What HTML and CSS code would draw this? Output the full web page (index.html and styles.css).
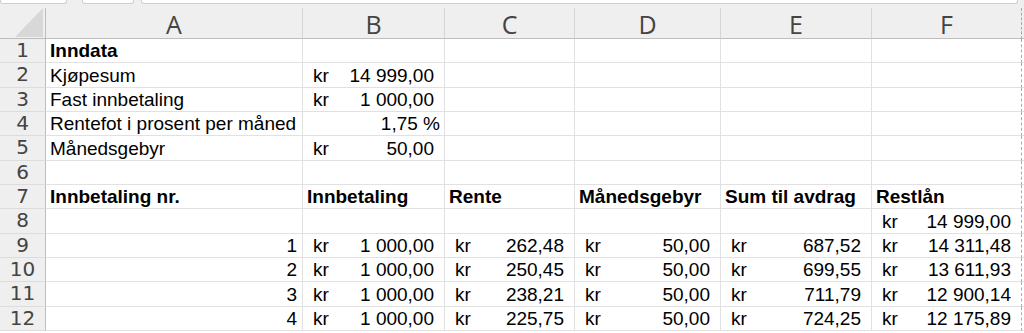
FILE: index.html
```html
<!DOCTYPE html>
<html lang="no">
<head>
<meta charset="utf-8">
<title>Nedbetaling</title>
<link rel="stylesheet" href="styles.css">
</head>
<body>
<div class="topbar">
  <div class="box box-name"></div>
  <div class="box box-btn"></div>
  <div class="box box-formula"></div>
</div>
<div class="sheet">
  <div class="hd corner"><svg width="28" height="29" viewBox="0 0 28 29"><polygon points="0,29 28,0 28,29" fill="#d8d8d8"/></svg></div>
  <div class="hd col">A</div><div class="hd col">B</div><div class="hd col">C</div><div class="hd col">D</div><div class="hd col">E</div><div class="hd col last">F</div><div class="hd tail"></div>

  <div class="rh">1</div><div class="c b">Inndata</div><div class="c"></div><div class="c"></div><div class="c"></div><div class="c"></div><div class="c last"></div><div class="c tail"></div>

  <div class="rh">2</div><div class="c">Kjøpesum</div><div class="c acct"><span>kr</span><span>14 999,00</span></div><div class="c"></div><div class="c"></div><div class="c"></div><div class="c last"></div><div class="c tail"></div>

  <div class="rh">3</div><div class="c">Fast innbetaling</div><div class="c acct"><span>kr</span><span>1 000,00</span></div><div class="c"></div><div class="c"></div><div class="c"></div><div class="c last"></div><div class="c tail"></div>

  <div class="rh">4</div><div class="c">Rentefot i prosent per måned</div><div class="c pct">1,75 %</div><div class="c"></div><div class="c"></div><div class="c"></div><div class="c last"></div><div class="c tail"></div>

  <div class="rh">5</div><div class="c">Månedsgebyr</div><div class="c acct"><span>kr</span><span>50,00</span></div><div class="c"></div><div class="c"></div><div class="c"></div><div class="c last"></div><div class="c tail"></div>

  <div class="rh">6</div><div class="c"></div><div class="c"></div><div class="c"></div><div class="c"></div><div class="c"></div><div class="c last"></div><div class="c tail"></div>

  <div class="rh">7</div><div class="c b">Innbetaling nr.</div><div class="c b">Innbetaling</div><div class="c b">Rente</div><div class="c b">Månedsgebyr</div><div class="c b">Sum til avdrag</div><div class="c b last">Restlån</div><div class="c tail"></div>

  <div class="rh">8</div><div class="c"></div><div class="c"></div><div class="c"></div><div class="c"></div><div class="c"></div><div class="c acct last"><span>kr</span><span>14 999,00</span></div><div class="c tail"></div>

  <div class="rh">9</div><div class="c num">1</div><div class="c acct"><span>kr</span><span>1 000,00</span></div><div class="c acct"><span>kr</span><span>262,48</span></div><div class="c acct"><span>kr</span><span>50,00</span></div><div class="c acct"><span>kr</span><span>687,52</span></div><div class="c acct last"><span>kr</span><span>14 311,48</span></div><div class="c tail"></div>

  <div class="rh">10</div><div class="c num">2</div><div class="c acct"><span>kr</span><span>1 000,00</span></div><div class="c acct"><span>kr</span><span>250,45</span></div><div class="c acct"><span>kr</span><span>50,00</span></div><div class="c acct"><span>kr</span><span>699,55</span></div><div class="c acct last"><span>kr</span><span>13 611,93</span></div><div class="c tail"></div>

  <div class="rh">11</div><div class="c num">3</div><div class="c acct"><span>kr</span><span>1 000,00</span></div><div class="c acct"><span>kr</span><span>238,21</span></div><div class="c acct"><span>kr</span><span>50,00</span></div><div class="c acct"><span>kr</span><span>711,79</span></div><div class="c acct last"><span>kr</span><span>12 900,14</span></div><div class="c tail"></div>

  <div class="rh">12</div><div class="c num">4</div><div class="c acct"><span>kr</span><span>1 000,00</span></div><div class="c acct"><span>kr</span><span>225,75</span></div><div class="c acct"><span>kr</span><span>50,00</span></div><div class="c acct"><span>kr</span><span>724,25</span></div><div class="c acct last"><span>kr</span><span>12 175,89</span></div><div class="c tail"></div>
</div>
</body>
</html>
```

FILE: styles.css
```css
* { box-sizing: border-box; }
html, body { margin: 0; padding: 0; }
body {
  width: 1024px;
  height: 333px;
  overflow: hidden;
  background: #ffffff;
  font-family: "Liberation Sans", Arial, sans-serif;
  color: #000;
}
.topbar {
  height: 8px;
  background: #efefef;
  display: flex;
  align-items: flex-start;
}
.box {
  height: 4px;
  background: #ffffff;
  border: 1px solid #cfcfcf;
  border-top: none;
  border-radius: 0 0 3px 3px;
}
.box-name { width: 67px; }
.box-btn { width: 52px; margin-left: 15px; }
.box-formula { width: 877px; margin-left: 7px; }

.sheet {
  display: grid;
  grid-template-columns: 46px 257px 142px 130px 146px 151px 150px 1fr;
  grid-template-rows: 31px repeat(12, 24.33px);
}
.hd {
  background: #efefef;
  border-right: 1px solid #d6d6d6;
  border-bottom: 1px solid #bdbdbd;
  display: flex;
  align-items: center;
  justify-content: center;
  color: #444;
}
.col {
  font-family: "Open Sans", sans-serif;
  font-size: 25px;
  line-height: 30px;
  padding-top: 1px;
}
.corner {
  justify-content: flex-end;
  align-items: flex-end;
  padding: 0 2px 1px 0;
  border-right: 1px solid #bdbdbd;
}
.rh {
  background: #efefef;
  border-right: 1px solid #bdbdbd;
  border-bottom: 1px solid #dcdcdc;
  display: flex;
  align-items: center;
  justify-content: center;
  font-family: "DejaVu Sans", sans-serif;
  font-size: 20px;
  line-height: 22px;
  color: #444;
  padding-bottom: 1px;
}
.c {
  border-right: 1px solid #e1e1e1;
  border-bottom: 1px solid #e1e1e1;
  display: flex;
  align-items: flex-end;
  padding: 0 4px 1px 4px;
  font-size: 19px;
  line-height: 21px;
  white-space: nowrap;
}
.b { font-weight: bold; }
.acct { justify-content: space-between; padding-left: 10px; padding-right: 10px; }
.num { justify-content: flex-end; padding-right: 5px; }
.pct { justify-content: flex-end; padding-right: 4px; }
.last { border-right: 1px dashed #a9a9a9; }
.hd.last { border-right: 1px dashed #a9a9a9; }
.tail { border-right: none; }
```
